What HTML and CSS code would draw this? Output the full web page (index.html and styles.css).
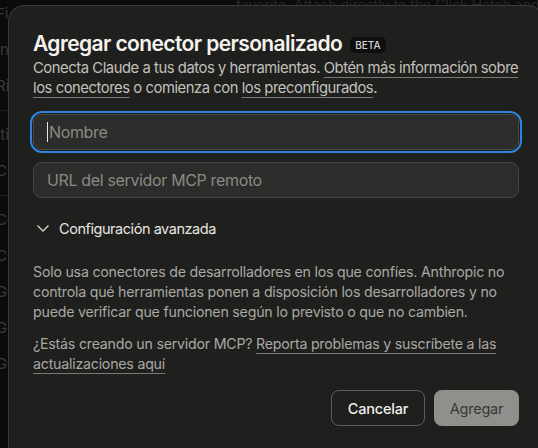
FILE: index.html
```html
<!DOCTYPE html>
<html lang="es">
<head>
    <meta charset="UTF-8">
    <title>Agregar conector personalizado</title>
    <link rel="stylesheet" href="styles.css">
</head>
<body>
<div class="page">
    <div class="side">
        <p class="side-item">Fi</p>
        <p class="side-item">In</p>
        <p class="side-item">Ri</p>
        <hr class="dots">
        <p class="side-item">Iti</p>
        <p class="side-item">C</p>
        <hr class="dots">
        <p class="side-item">Co</p>
        <p class="side-item">C</p>
        <p class="side-item">G</p>
        <p class="side-item">G</p>
        <p class="side-item">G</p>
    </div>
    <p class="top-text">favorite. Attach directly to the Click Hatch and mark the</p>
</div>

<div class="modal">
    <div class="title-row">
        <h1 class="title">Agregar conector personalizado</h1>
        <span class="badge">BETA</span>
    </div>
    <p class="intro">Conecta Claude a tus datos y herramientas. <a href="#">Obtén más información sobre los conectores</a> o comienza con <a href="#">los preconfigurados</a>.</p>

    <div class="fields">
        <div class="field focus"><span class="caret"></span><span class="ph">Nombre</span></div>
        <div class="field"><span class="ph">URL del servidor MCP remoto</span></div>
    </div>

    <div class="advanced">
        <svg width="14" height="14" viewBox="0 0 14 14"><path d="M1.5 4.5 L7 10 L12.5 4.5" fill="none" stroke="#d8d7d2" stroke-width="1.3"/></svg>
        <span>Configuración avanzada</span>
    </div>

    <p class="note">Solo usa conectores de desarrolladores en los que confíes. Anthropic no controla qué herramientas ponen a disposición los desarrolladores y no puede verificar que funcionen según lo previsto o que no cambien.</p>
    <p class="note">¿Estás creando un servidor MCP? <a href="#">Reporta problemas y suscríbete a las actualizaciones aquí</a></p>

    <div class="actions">
        <button class="btn cancel">Cancelar</button>
        <button class="btn add">Agregar</button>
    </div>
</div>
</body>
</html>
```
FILE: styles.css
```css
* {
    margin: 0;
    padding: 0;
    box-sizing: border-box;
}

body {
    width: 538px;
    height: 448px;
    overflow: hidden;
    background: #0b0b0b;
    font-family: Inter, "Noto Sans", sans-serif;
    position: relative;
}

.page {
    height: 100%;
}

.side {
    width: 30px;
    margin-left: -4px;
    padding-top: 2px;
    color: #3a3a38;
    font-size: 15px;
}

.side-item {
    height: 36px;
    line-height: 24px;
}

.dots {
    border: 0;
    border-top: 1px dotted #333;
    margin: 0 0 12px 0;
}

.top-text {
    position: absolute;
    top: -4px;
    left: 236px;
    color: #262625;
    font-size: 14px;
    white-space: nowrap;
}

.modal {
    position: absolute;
    left: 8px;
    top: 5px;
    width: 536px;
    height: 460px;
    background: #1f1f1e;
    border: 1px solid #3b3b39;
    border-radius: 16px;
    padding: 23px 24px 0 24px;
    color: #c2c1bb;
}

.title-row {
    display: flex;
    align-items: center;
    gap: 8px;
    height: 29px;
}

.title {
    font-size: 21px;
    font-weight: 600;
    color: #f4f3ee;
    letter-spacing: -0.6px;
}

.badge {
    background: #0f0f0f;
    color: #d6d5d0;
    font-size: 10px;
    font-weight: 500;
    padding: 2px 5px;
    border-radius: 5px;
    margin-top: 2px;
}

.intro {
    font-size: 14.8px;
    line-height: 20px;
    letter-spacing: -0.45px;
}

a {
    color: inherit;
    text-decoration: underline;
    text-decoration-color: #7a7975;
    text-underline-offset: 4px;
    text-decoration-thickness: 1px;
}

.fields {
    display: flex;
    flex-direction: column;
    gap: 12px;
    margin-top: 16px;
}

.field {
    height: 36px;
    background: #2c2c2a;
    border: 1px solid #484845;
    border-radius: 9px;
    display: flex;
    align-items: center;
    padding: 0 13px;
    font-size: 16px;
    letter-spacing: -0.35px;
    color: #8a8985;
}

.focus {
    outline: 2px solid #2e84dc;
    outline-offset: 1px;
}

.caret {
    width: 1px;
    height: 20px;
    background: #e8e8e4;
    margin-right: 1px;
}

.advanced {
    display: flex;
    align-items: center;
    gap: 9px;
    margin-top: 20px;
    margin-left: 3px;
    font-size: 14.5px;
    letter-spacing: -0.45px;
    color: #e6e5e0;
    height: 20px;
}

.note {
    font-size: 14.2px;
    line-height: 20px;
    letter-spacing: -0.22px;
    color: #a9a8a3;
    margin-top: 12px;
}

.advanced + .note {
    margin-top: 24px;
}

.actions {
    display: flex;
    justify-content: flex-end;
    gap: 9px;
    margin-top: 16px;
}

.btn {
    height: 36px;
    border-radius: 8px;
    font-family: inherit;
    font-size: 14.5px;
    font-weight: 500;
    letter-spacing: -0.2px;
}

.cancel {
    background: #1f1f1e;
    border: 1px solid #5d5d5a;
    color: #f0efea;
    width: 94px;
}

.add {
    background: #8f8f8c;
    border: 0;
    color: #393937;
    width: 85px;
    font-weight: 400;
}
```
